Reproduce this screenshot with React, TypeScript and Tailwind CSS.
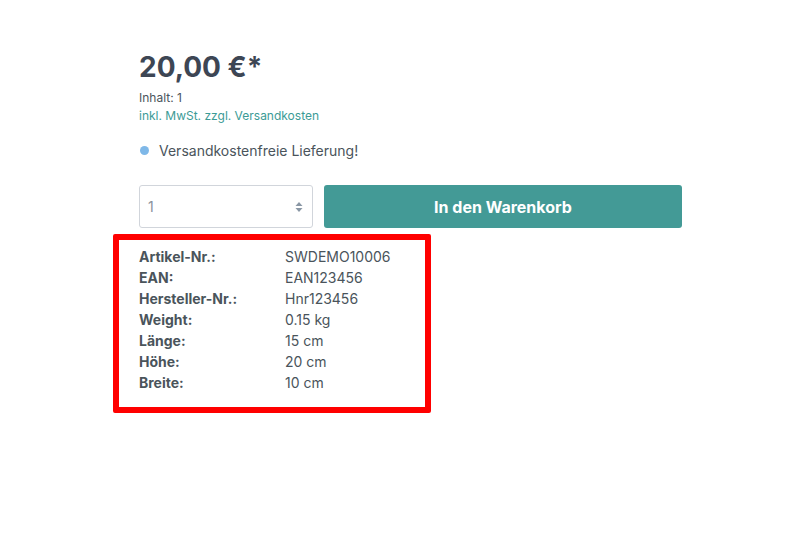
import { FC } from 'react';

const specs: [string, string][] = [
  ['Artikel-Nr.:', 'SWDEMO10006'],
  ['EAN:', 'EAN123456'],
  ['Hersteller-Nr.:', 'Hnr123456'],
  ['Weight:', '0.15 kg'],
  ['Länge:', '15 cm'],
  ['Höhe:', '20 cm'],
  ['Breite:', '10 cm'],
];

const App: FC = () => {
  return (
    <div className="min-h-[534px] w-[789px] bg-white font-['Inter',sans-serif] text-[#4a545b]">
      <div className="ml-[139px] w-[543px] pt-[48px]">
        <p className="text-[28px] font-bold leading-[38px] text-[#3d4654]">20,00 €*</p>
        <p className="mt-[3px] text-[12px] leading-[18px]">Inhalt: 1</p>
        <p className="text-[12px] leading-[18px] text-[#3c9b96]">inkl. MwSt. zzgl. Versandkosten</p>
        <div className="mt-[15px] flex items-center gap-[10px] text-[14px] leading-[21px]">
          <span className="ml-[1px] h-[9px] w-[9px] rounded-full bg-[#7fb8e8]" />
          <span>Versandkostenfreie Lieferung!</span>
        </div>
        <div className="mt-[24px] flex gap-[11px]">
          <div className="flex h-[43px] w-[174px] items-center justify-between rounded-[3px] border border-[#d1d5db] pl-[8px] pr-[9px] text-[14px] text-[#8a929b]">
            <span>1</span>
            <svg width="8" height="12" viewBox="0 0 8 12" className="fill-[#8a97a5]">
              <path d="M4 1 L7.5 5 H0.5 Z" />
              <path d="M4 11 L7.5 7 H0.5 Z" />
            </svg>
          </div>
          <button className="h-[43px] flex-1 rounded-[3px] bg-[#439a96] text-[16px] font-bold text-white">
            In den Warenkorb
          </button>
        </div>
      </div>
      <div className="ml-[113px] mt-[6px] w-[318px] rounded-[2px] border-[6px] border-[#ff0000] pb-[14px] pl-[20px] pt-[6px]">
        {specs.map(([label, value]) => (
          <div key={label} className="flex text-[14px] leading-[21px]">
            <span className="w-[146px] font-bold">{label}</span>
            <span>{value}</span>
          </div>
        ))}
      </div>
    </div>
  );
};

export default App;
